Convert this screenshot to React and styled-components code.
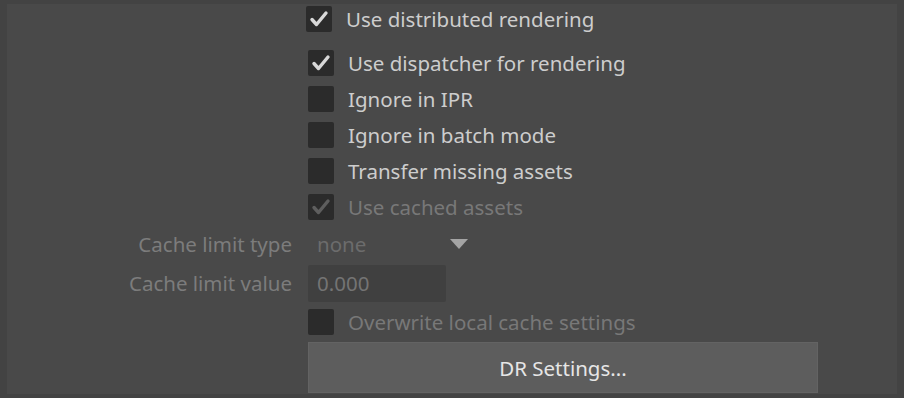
import React from 'react';
import styled, { createGlobalStyle } from 'styled-components';

const GlobalStyle = createGlobalStyle`
  html, body {
    margin: 0;
    padding: 0;
    background: #444444;
  }
  body {
    font-family: 'Noto Sans', 'Open Sans', sans-serif;
  }
`;

const Frame = styled.div`
  width: 904px;
  height: 398px;
  box-sizing: border-box;
  padding: 4px 7px 4px 7px;
  background: #434343;
  overflow: hidden;
`;

const Panel = styled.div`
  height: 100%;
  background: #494949;
  display: grid;
  grid-template-columns: 285px 1fr;
  grid-auto-rows: min-content;
  column-gap: 16px;
`;

const Label = styled.div`
  text-align: right;
  font-size: 20.5px;
  color: #7c7c7c;
  display: flex;
  align-items: center;
  justify-content: flex-end;
  height: ${(p) => p.h || 36}px;
  margin-top: ${(p) => p.mt || 0}px;
`;

const Control = styled.div`
  display: flex;
  align-items: center;
  height: ${(p) => p.h || 36}px;
  margin-top: ${(p) => p.mt || 0}px;
  margin-left: ${(p) => p.ml || 0}px;
`;

const Box = styled.span`
  width: 26px;
  height: 26px;
  box-sizing: border-box;
  border-radius: 2px;
  background: #2b2b2b;
  display: flex;
  align-items: center;
  justify-content: center;
  flex-shrink: 0;
`;

const Text = styled.span`
  margin-left: 14px;
  font-size: 20.5px;
  color: ${(p) => (p.disabled ? '#787878' : '#cdcdcd')};
  white-space: nowrap;
`;

const Select = styled.div`
  width: 160px;
  display: flex;
  align-items: center;
  justify-content: space-between;
  padding-left: 9px;
  box-sizing: border-box;
  font-size: 20.5px;
  color: #6c6c6c;
`;

const Input = styled.div`
  width: 138px;
  height: 37px;
  box-sizing: border-box;
  background: #404040;
  border-radius: 2px;
  padding-left: 9px;
  display: flex;
  align-items: center;
  font-size: 20.5px;
  color: #747474;
`;

const Button = styled.div`
  width: 510px;
  height: 51px;
  box-sizing: border-box;
  background: #5d5d5d;
  border: 1px solid #636363;
  display: flex;
  align-items: center;
  justify-content: center;
  font-size: 20.5px;
  color: #e6e6e6;
`;

const Check = ({ dim }) => (
  <svg width="20" height="18" viewBox="0 0 20 18">
    <path
      d="M3 9.5 L7.5 14.5 L17 3"
      fill="none"
      stroke={dim ? '#5e5e5e' : '#d8d8d8'}
      strokeWidth="3.4"
      strokeLinecap="round"
      strokeLinejoin="round"
    />
  </svg>
);

const CheckRow = ({ checked, disabled, label, mt, ml, h }) => (
  <>
    <Label h={h} mt={mt} />
    <Control mt={mt} ml={ml} h={h}>
      <Box>{checked && <Check dim={disabled} />}</Box>
      <Text disabled={disabled}>{label}</Text>
    </Control>
  </>
);

const App = () => (
  <>
    <GlobalStyle />
    <Frame>
      <Panel>
        <CheckRow checked label="Use distributed rendering" h={30} ml={-2} />
        <CheckRow checked label="Use dispatcher for rendering" mt={11} />
        <CheckRow label="Ignore in IPR" />
        <CheckRow label="Ignore in batch mode" />
        <CheckRow label="Transfer missing assets" />
        <CheckRow checked disabled label="Use cached assets" />
        <Label h={38}>Cache limit type</Label>
        <Control h={38}>
          <Select>
            <span>none</span>
            <svg width="18" height="11" viewBox="0 0 18 11">
              <path d="M0 0 H18 L9 10 Z" fill="#a4a4a4" />
            </svg>
          </Select>
        </Control>
        <Label h={40}>Cache limit value</Label>
        <Control h={40}>
          <Input>0.000</Input>
        </Control>
        <CheckRow disabled label="Overwrite local cache settings" h={38} />
        <div />
        <Control h={52} mt={1} style={{ alignItems: 'flex-start' }}>
          <Button>DR Settings...</Button>
        </Control>
      </Panel>
    </Frame>
  </>
);

export default App;
